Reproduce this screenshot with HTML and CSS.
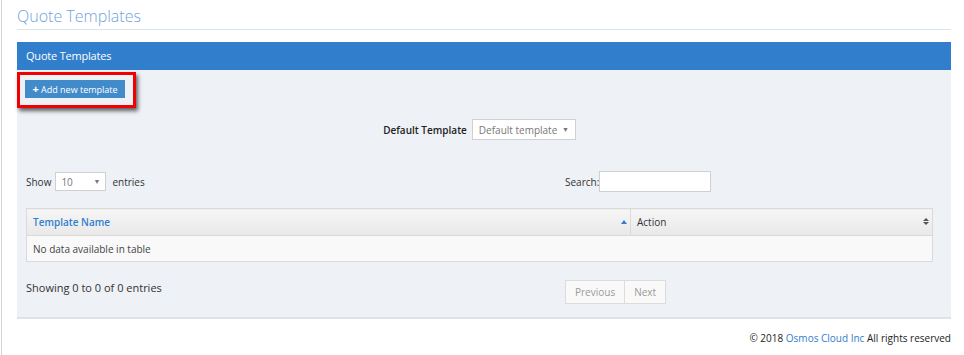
FILE: index.html
```html
<!DOCTYPE html>
<html lang="en">
<head>
    <meta charset="UTF-8">
    <meta name="viewport" content="width=device-width, initial-scale=1.0">
    <title>Quote Templates</title>
    <link rel="stylesheet" href="styles.css">
</head>
<body>
    <div class="sidebar-edge"></div>
    <div class="content">
        <h1 class="page-title">Quote Templates</h1>

        <div class="panel">
            <div class="panel-heading">Quote Templates</div>
            <div class="panel-body">
                <div class="highlight">
                    <button class="btn-add" type="button"><span class="plus">+</span> Add new template</button>
                </div>

                <div class="default-row">
                    <label for="defaultTemplate">Default Template</label>
                    <div class="select select-wide" id="defaultTemplate">Default template <span class="caret">&#9660;</span></div>
                </div>

                <div class="table-top">
                    <div class="length">
                        Show
                        <div class="select select-small">10 <span class="caret">&#9660;</span></div>
                        entries
                    </div>
                    <div class="filter">
                        <label for="search">Search:</label><input type="text" id="search">
                    </div>
                </div>

                <table class="data-table">
                    <thead>
                        <tr>
                            <th class="col-name">Template Name <span class="sort-up"></span></th>
                            <th class="col-action">Action <span class="sort-both"><i class="up"></i><i class="down"></i></span></th>
                        </tr>
                    </thead>
                    <tbody>
                        <tr>
                            <td colspan="2">No data available in table</td>
                        </tr>
                    </tbody>
                </table>

                <div class="table-bottom">
                    <div class="info">Showing 0 to 0 of 0 entries</div>
                    <div class="pager">
                        <span class="page-btn">Previous</span><span class="page-btn">Next</span>
                    </div>
                </div>
            </div>
        </div>

        <div class="footer">&copy; 2018 <a href="#">Osmos Cloud Inc</a> All rights reserved</div>
    </div>
</body>
</html>
```

FILE: styles.css
```css
body {
    font-family: "Open Sans", Arial, sans-serif;
    font-size: 11px;
    color: #333;
    background: #fff;
    margin: 0;
    display: flex;
    min-height: 355px;
}
.sidebar-edge {
    width: 1px;
    margin-left: 1px;
    background: #d4d4d4;
}
.content {
    flex: 1;
    padding: 0 13px 0 15px;
}
.page-title {
    margin: 0;
    height: 30px;
    box-sizing: border-box;
    padding-top: 6px;
    font-size: 16px;
    font-weight: 300;
    line-height: 20px;
    color: #6fa3e0;
    border-bottom: 1px solid #d8e4ef;
}
.panel {
    margin-top: 12px;
    background: #eef1f6;
    border-bottom: 2px solid #dfe2e6;
}
.panel-heading {
    height: 28px;
    line-height: 28px;
    padding: 0 9px;
    background: #307ecc;
    color: #fff;
    font-size: 11px;
    font-weight: 400;
    letter-spacing: -0.2px;
}
.panel-body {
    padding: 2px 18px 13px 9px;
}
.highlight {
    display: inline-block;
    margin-left: -9px;
    border: 3px solid #f00000;
    padding: 5px 8px 7px 5px;
    box-shadow: 2px 3px 4px rgba(0, 0, 0, 0.6);
}
.btn-add {
    display: block;
    width: 100px;
    height: 18px;
    padding: 0;
    border: none;
    background: #428bca;
    color: #fff;
    font-family: "Open Sans", Arial, sans-serif;
    font-size: 9px;
    line-height: 18px;
    cursor: pointer;
}
.btn-add .plus {
    font-weight: 700;
    font-size: 11px;
}
.default-row {
    display: flex;
    justify-content: center;
    align-items: center;
    margin-top: 11px;
}
.default-row label {
    font-size: 10px;
    font-weight: 600;
    color: #222;
    margin-right: 5px;
}
.select {
    box-sizing: border-box;
    display: flex;
    align-items: center;
    justify-content: space-between;
    background: #fff;
    border: 1px solid #d0d0d0;
    color: #777;
    font-size: 10px;
}
.select-wide {
    width: 104px;
    height: 21px;
    padding: 0 6px;
}
.select-small {
    width: 51px;
    height: 19px;
    padding: 0 5px;
    margin: 0 6px 0 4px;
}
.caret {
    font-size: 7px;
    color: #777;
}
.table-top {
    display: grid;
    grid-template-columns: 539px 1fr;
    align-items: center;
    margin-top: 31px;
}
.length {
    display: flex;
    align-items: center;
    font-size: 10px;
    color: #333;
}
.filter {
    display: flex;
    align-items: center;
    font-size: 10px;
}
.filter input {
    width: 112px;
    height: 21px;
    box-sizing: border-box;
    border: 1px solid #d0d0d0;
    margin: 0;
    padding: 0 4px;
}
.data-table {
    width: 100%;
    margin-top: 16px;
    border-collapse: collapse;
    border: 1px solid #dadada;
}
.data-table th {
    position: relative;
    height: 26px;
    padding: 0 6px;
    text-align: left;
    font-size: 10px;
    background: linear-gradient(#f6f6f6, #e9e9ea);
    border-bottom: 1px solid #dadada;
}
.col-name {
    width: 591px;
    color: #307ecc;
    font-weight: 600;
    border-right: 1px solid #dadada;
}
.col-action {
    font-weight: 400;
    color: #333;
}
.sort-up {
    position: absolute;
    right: 3px;
    top: 11px;
    border-left: 3px solid transparent;
    border-right: 3px solid transparent;
    border-bottom: 4px solid #307ecc;
}
.sort-both {
    position: absolute;
    right: 3px;
    top: 9px;
}
.sort-both i {
    display: block;
    border-left: 3px solid transparent;
    border-right: 3px solid transparent;
}
.sort-both .up {
    border-bottom: 3px solid #555;
    margin-bottom: 1px;
}
.sort-both .down {
    border-top: 3px solid #555;
}
.data-table td {
    height: 25px;
    padding: 0 6px;
    background: #f9f9f9;
    font-size: 10px;
    color: #444;
}
.table-bottom {
    display: grid;
    grid-template-columns: 539px 1fr;
    align-items: start;
    margin-top: 18px;
}
.info {
    padding-top: 0;
    line-height: 16px;
}
.pager {
    display: flex;
}
.page-btn {
    box-sizing: border-box;
    height: 24px;
    line-height: 22px;
    padding: 0 9px;
    background: #f9f9f9;
    border: 1px solid #dcdcdc;
    color: #999;
    font-size: 10px;
}
.page-btn + .page-btn {
    border-left: none;
}
.footer {
    text-align: right;
    padding: 12px 0 0;
    font-size: 10px;
    color: #222;
}
.footer a {
    color: #307ecc;
    text-decoration: none;
}
```
